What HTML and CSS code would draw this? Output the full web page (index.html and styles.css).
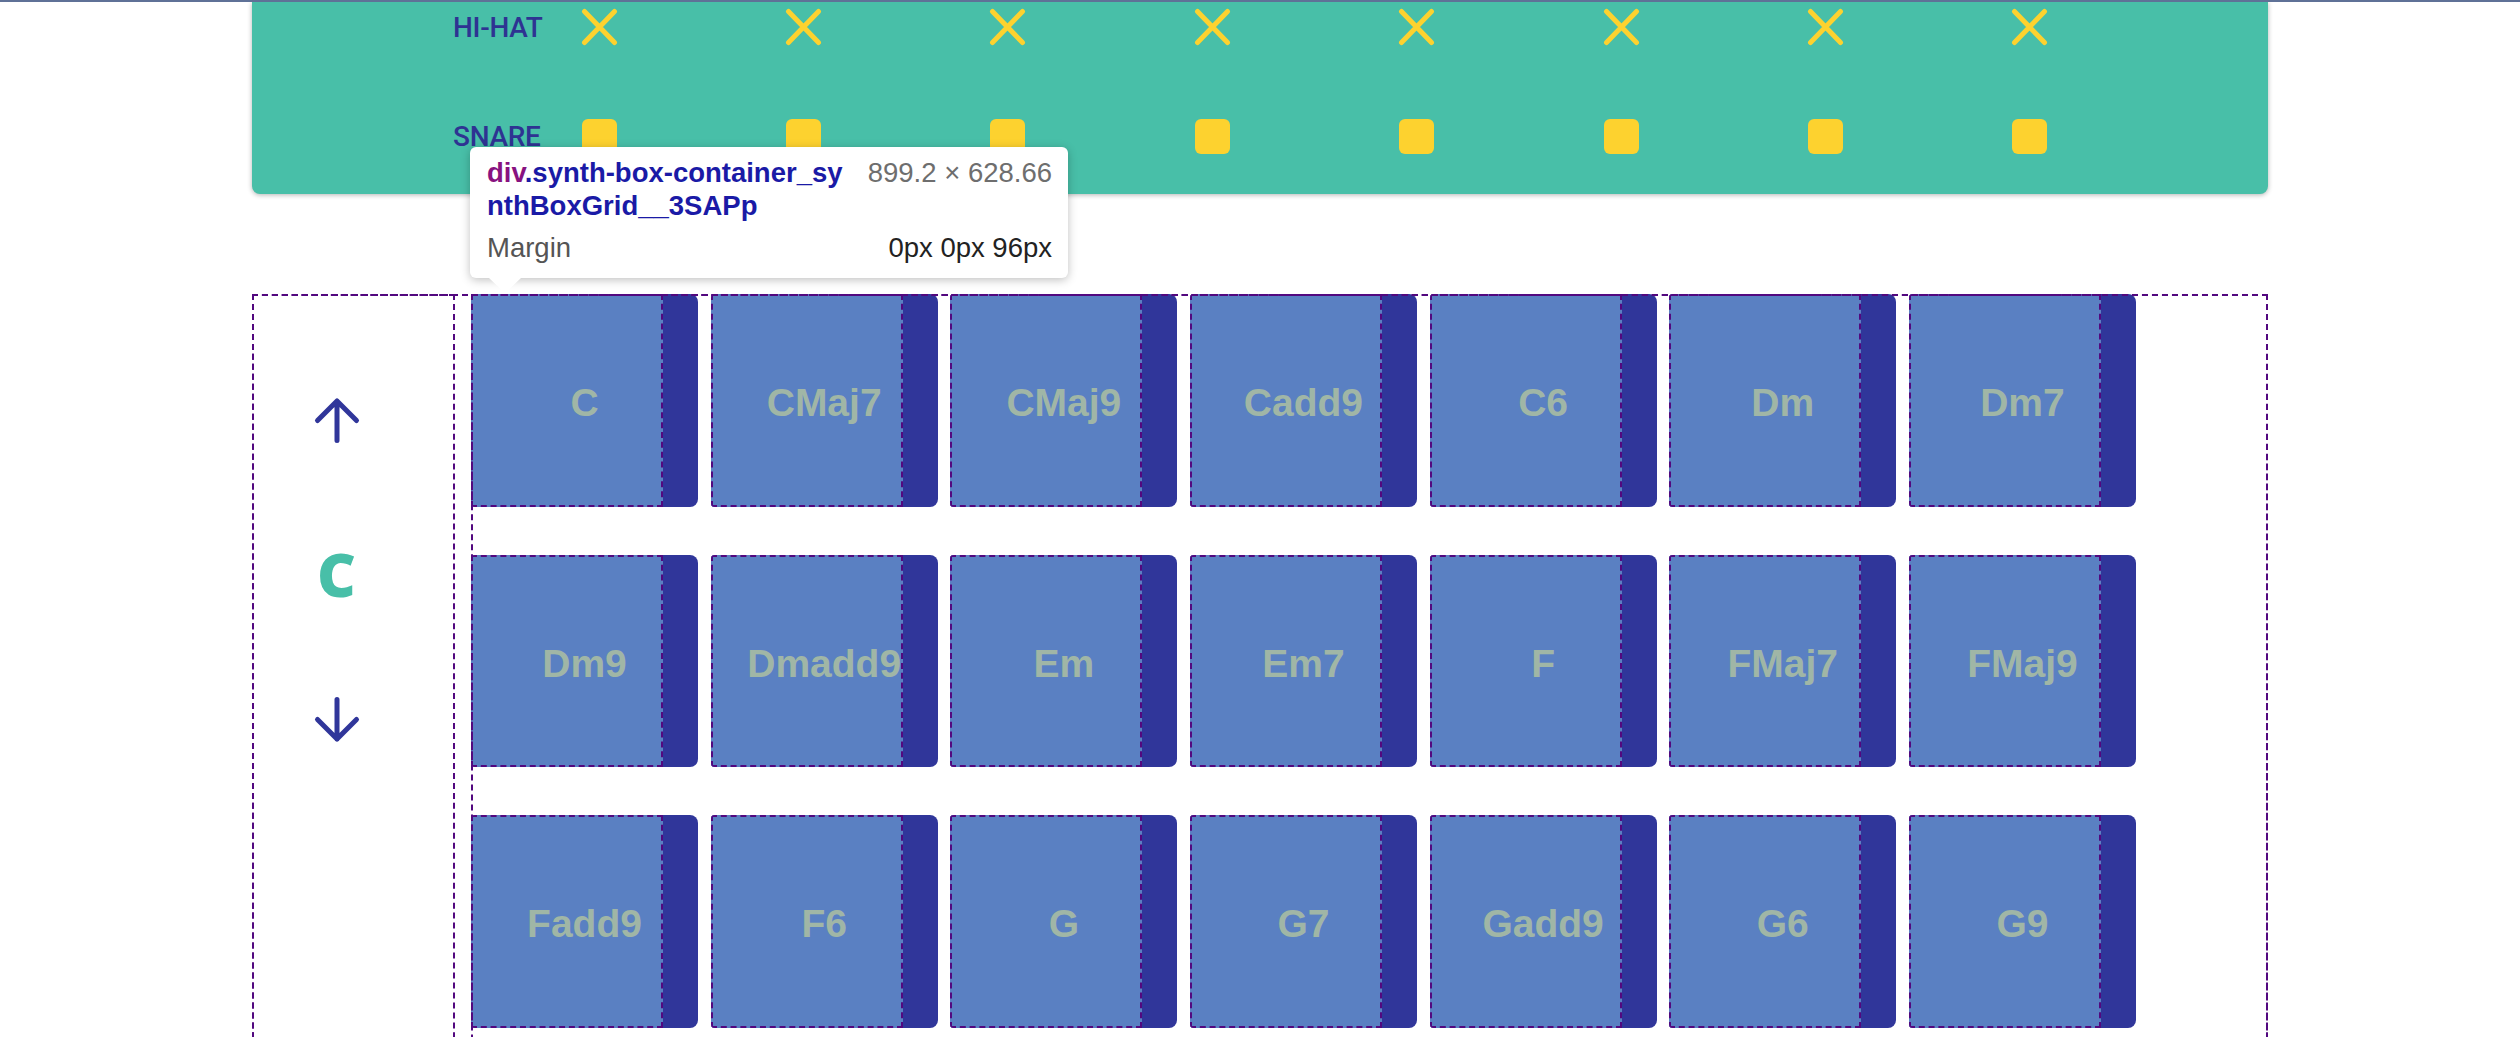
FILE: index.html
```html
<!DOCTYPE html>
<html lang="en">
<head>
    <meta charset="UTF-8">
    <meta name="viewport" content="width=device-width, initial-scale=1.0">
    <title>Chord Synth</title>
    <link rel="stylesheet" href="styles.css">
</head>
<body>
    <div class="page">
        <div class="drum-machine">
            <div class="drum-row">
                <span class="drum-label">HI-HAT</span>
                <span class="step"><svg class="hat-x" viewBox="0 0 37 38"><path d="M3.5 3.5L33.5 34.5M33.5 3.5L3.5 34.5"/></svg></span>
                <span class="step"><svg class="hat-x" viewBox="0 0 37 38"><path d="M3.5 3.5L33.5 34.5M33.5 3.5L3.5 34.5"/></svg></span>
                <span class="step"><svg class="hat-x" viewBox="0 0 37 38"><path d="M3.5 3.5L33.5 34.5M33.5 3.5L3.5 34.5"/></svg></span>
                <span class="step"><svg class="hat-x" viewBox="0 0 37 38"><path d="M3.5 3.5L33.5 34.5M33.5 3.5L3.5 34.5"/></svg></span>
                <span class="step"><svg class="hat-x" viewBox="0 0 37 38"><path d="M3.5 3.5L33.5 34.5M33.5 3.5L3.5 34.5"/></svg></span>
                <span class="step"><svg class="hat-x" viewBox="0 0 37 38"><path d="M3.5 3.5L33.5 34.5M33.5 3.5L3.5 34.5"/></svg></span>
                <span class="step"><svg class="hat-x" viewBox="0 0 37 38"><path d="M3.5 3.5L33.5 34.5M33.5 3.5L3.5 34.5"/></svg></span>
                <span class="step"><svg class="hat-x" viewBox="0 0 37 38"><path d="M3.5 3.5L33.5 34.5M33.5 3.5L3.5 34.5"/></svg></span>
            </div>
            <div class="drum-row">
                <span class="drum-label">SNARE</span>
                <span class="step"><span class="step-square"></span></span>
                <span class="step"><span class="step-square"></span></span>
                <span class="step"><span class="step-square"></span></span>
                <span class="step"><span class="step-square"></span></span>
                <span class="step"><span class="step-square"></span></span>
                <span class="step"><span class="step-square"></span></span>
                <span class="step"><span class="step-square"></span></span>
                <span class="step"><span class="step-square"></span></span>
            </div>
        </div>

        <div class="synth-box-container">
            <div class="scale-nav">
                <button class="arrow-btn">
                    <svg viewBox="0 0 48 48"><path d="M24 44.5V5M4.5 24.5L24 5l19.5 19.5"/></svg>
                </button>
                <span class="scale-key">C</span>
                <button class="arrow-btn">
                    <svg viewBox="0 0 48 48"><path d="M24 3.5V43M4.5 23.5L24 43l19.5-19.5"/></svg>
                </button>
            </div>

            <div class="synth-box-grid">
                <div class="chord"><span class="chord-name">C</span></div>
                <div class="chord"><span class="chord-name">CMaj7</span></div>
                <div class="chord"><span class="chord-name">CMaj9</span></div>
                <div class="chord"><span class="chord-name">Cadd9</span></div>
                <div class="chord"><span class="chord-name">C6</span></div>
                <div class="chord"><span class="chord-name">Dm</span></div>
                <div class="chord"><span class="chord-name">Dm7</span></div>

                <div class="chord"><span class="chord-name">Dm9</span></div>
                <div class="chord"><span class="chord-name">Dmadd9</span></div>
                <div class="chord"><span class="chord-name">Em</span></div>
                <div class="chord"><span class="chord-name">Em7</span></div>
                <div class="chord"><span class="chord-name">F</span></div>
                <div class="chord"><span class="chord-name">FMaj7</span></div>
                <div class="chord"><span class="chord-name">FMaj9</span></div>

                <div class="chord"><span class="chord-name">Fadd9</span></div>
                <div class="chord"><span class="chord-name">F6</span></div>
                <div class="chord"><span class="chord-name">G</span></div>
                <div class="chord"><span class="chord-name">G7</span></div>
                <div class="chord"><span class="chord-name">Gadd9</span></div>
                <div class="chord"><span class="chord-name">G6</span></div>
                <div class="chord"><span class="chord-name">G9</span></div>
            </div>
        </div>
    </div>

    <div class="inspect-tip">
        <div class="inspect-head">
            <span class="inspect-title"><span class="tag">div</span>.synth-box-container_sy<br>nthBoxGrid__3SAPp</span>
            <span class="inspect-size">899.2 × 628.66</span>
        </div>
        <div class="inspect-row">
            <span>Margin</span>
            <span class="inspect-value">0px 0px 96px</span>
        </div>
    </div>
</body>
</html>
```

FILE: styles.css
```css
:root {
    --teal: #48bfa8;
    --navy: #30369a;
    --yellow: #fdd22f;
    --chord-blue: #5a80c2;
    --chord-text: #a0b6a6;
    --dash: #52087f;
}

body {
    margin: 0;
    border-top: 2px solid #5f7197;
    font-family: "Liberation Sans", Arial, sans-serif;
    background-color: #ffffff;
}

.page {
    padding: 0 252px;
}

/* drum machine */

.drum-machine {
    background-color: var(--teal);
    border-radius: 0 0 8px 8px;
    box-shadow: 0 1px 5px rgba(0, 0, 0, 0.3);
    padding: 0 0 33px 201px;
}

.drum-row {
    display: grid;
    grid-template-columns: 44px repeat(8, 204.4px);
    align-items: center;
    height: 50px;
}

.drum-row + .drum-row {
    margin-top: 59px;
}

.drum-label {
    font-family: Roboto, "Liberation Sans", sans-serif;
    font-weight: 500;
    font-size: 28px;
    letter-spacing: -0.3px;
    color: #2e3392;
    white-space: nowrap;
}

.step {
    justify-self: center;
    display: flex;
}

.hat-x {
    width: 37px;
    height: 38px;
    fill: none;
    stroke: var(--yellow);
    stroke-width: 5;
    stroke-linecap: round;
}

.step-square {
    width: 35px;
    height: 35px;
    border-radius: 6px;
    background-color: var(--yellow);
}

/* synth boxes */

.synth-box-container {
    display: flex;
    margin-top: 100px;
    outline: 2px dashed var(--dash);
    outline-offset: -2px;
}

.scale-nav {
    width: 203px;
    box-sizing: border-box;
    padding: 102px 34px 0 0;
    margin-right: 16px;
    display: flex;
    flex-direction: column;
    align-items: center;
    outline: 2px dashed var(--dash);
    outline-offset: -2px;
}

.arrow-btn {
    width: 48px;
    height: 48px;
    padding: 0;
    border: none;
    background: none;
    cursor: pointer;
}

.arrow-btn svg {
    display: block;
    width: 48px;
    height: 48px;
    fill: none;
    stroke: var(--navy);
    stroke-width: 5;
    stroke-linecap: round;
    stroke-linejoin: round;
}

.scale-key {
    font-family: "Open Sans", "Liberation Sans", sans-serif;
    font-weight: 800;
    font-size: 60px;
    line-height: 60px;
    color: var(--teal);
    margin: 100px 0 92px;
}

.synth-box-grid {
    flex: 1;
    min-height: 1257px;
    display: flex;
    flex-wrap: wrap;
    align-content: flex-start;
    gap: 48px 12.67px;
    margin-bottom: 96px;
    outline: 2px dashed var(--dash);
    outline-offset: -2px;
}

.chord {
    width: 227px;
    height: 212.5px;
    display: flex;
    border-radius: 4px 8px 8px 4px;
    background-color: var(--navy);
    overflow: hidden;
    cursor: pointer;
}

.chord-name {
    width: 192px;
    box-sizing: border-box;
    padding: 6px 0 0 35px;
    display: flex;
    align-items: center;
    justify-content: center;
    background-color: var(--chord-blue);
    color: var(--chord-text);
    font-weight: bold;
    font-size: 39px;
    white-space: nowrap;
    outline: 2px dashed var(--dash);
    outline-offset: -2px;
}

/* devtools inspect tooltip */

.inspect-tip {
    position: absolute;
    left: 470px;
    top: 147px;
    width: 598px;
    box-sizing: border-box;
    padding: 9px 16px 14px 17px;
    background-color: #ffffff;
    border-radius: 6px;
    box-shadow: 0 2px 10px rgba(0, 0, 0, 0.25);
    font-size: 27.5px;
    line-height: 33px;
}

.inspect-tip::after {
    content: "";
    position: absolute;
    left: 19px;
    top: 100%;
    border-left: 16px solid transparent;
    border-right: 16px solid transparent;
    border-top: 15px solid #ffffff;
}

.inspect-head {
    display: flex;
    justify-content: space-between;
}

.inspect-title {
    font-weight: bold;
    color: #1a1aa6;
}

.tag {
    color: #881280;
}

.inspect-size {
    color: #6e6e6e;
}

.inspect-row {
    display: flex;
    justify-content: space-between;
    margin-top: 9px;
    color: #555555;
}

.inspect-value {
    color: #222222;
}
```
